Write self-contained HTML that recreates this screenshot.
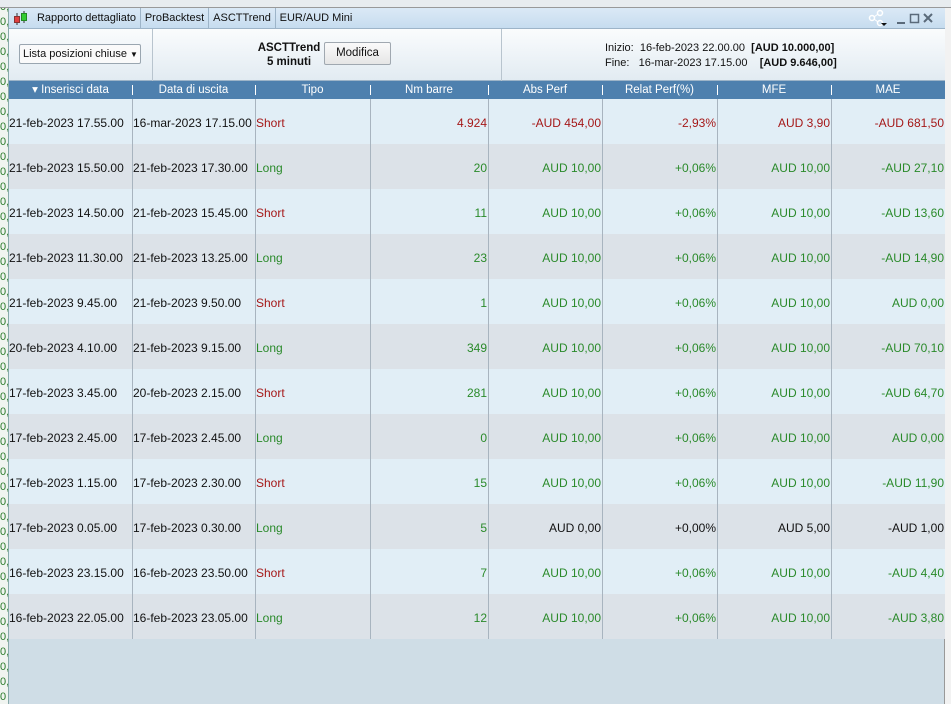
<!DOCTYPE html>
<html><head><meta charset="utf-8"><style>
*{margin:0;padding:0;box-sizing:border-box}
body{width:951px;height:704px;overflow:hidden;background:#f4f4f4;font-family:"Liberation Sans",Arial,sans-serif;font-size:12px;position:relative}
.abs{position:absolute}
.left{left:0;top:0;width:8px;height:704px;background:#f0f4f0;overflow:hidden;color:#2a7a2a;font-size:11px;line-height:15px}
.win{left:8px;top:8px;width:936px;height:696px;background:#cfdde6;border-left:1px solid #8aa;}
.title{left:0;top:0;width:936px;height:21px;background:linear-gradient(#dbe9f6,#c6dcef);border-bottom:1px solid #9db4c8}
.tab{position:absolute;top:0;height:20px;line-height:20px;font-size:11px;color:#111;border-right:1px solid #9db4c8;text-align:center;white-space:nowrap;overflow:hidden}
.tool{left:0;top:21px;width:936px;height:52px;background:linear-gradient(#fafcfd,#e2ebf2);border-bottom:1px solid #9db4c8}
.hdr{left:0;top:73px;width:936px;height:18px;background:#4e80ae;color:#fff;font-size:11.5px}
.hdr div{position:absolute;top:0;height:18px;line-height:18px;text-align:center}
.hdr span{position:absolute;top:4px;width:1px;height:10px;background:#fff}
.row{position:absolute;left:0;width:936px;height:45px}
.row div{position:absolute;top:0;height:45px;line-height:48px;white-space:nowrap;font-size:12px}
.vl{position:absolute;top:91px;width:1px;height:540px;background:#a8b4bf}
.g{color:#2a8a2a}.r{color:#a51818}.k{color:#111}
</style></head><body>
<div class="abs left">0,<br>0,<br>0,<br>0,<br>0,<br>0,<br>0,<br>0,<br>0,<br>0,<br>0,<br>0,<br>0,<br>0,<br>0,<br>0,<br>0,<br>0,<br>0,<br>0,<br>0,<br>0,<br>0,<br>0,<br>0,<br>0,<br>0,<br>0,<br>0,<br>0,<br>0,<br>0,<br>0,<br>0,<br>0,<br>0,<br>0,<br>0,<br>0,<br>0,<br>0,<br>0,<br>0,<br>0,<br>0,<br>0,<br>0</div>
<div class="abs" style="left:0;top:0;width:951px;height:8px;background:#e8ecef;border-bottom:1px solid #999"></div>
<div class="abs" style="left:944px;top:8px;width:7px;height:696px;background:#f2f2f2;border-left:1px solid #999"></div>
<div class="abs win">
 <div class="abs title">
  <svg class="abs" style="left:4px;top:3px" width="16" height="15"><line x1="4" y1="2" x2="4" y2="14" stroke="#333"/><rect x="1.5" y="5.5" width="5" height="6" fill="#e04040" stroke="#833"/><line x1="11" y1="0" x2="11" y2="12" stroke="#333"/><rect x="8.5" y="2.5" width="5" height="7" fill="#3c3" stroke="#282"/></svg>
  <div class="tab" style="left:24px;width:108px">Rapporto dettagliato</div>
  <div class="tab" style="left:132px;width:68px">ProBacktest</div>
  <div class="tab" style="left:200px;width:67px">ASCTTrend</div>
  <div class="tab" style="left:267px;width:80px;border:none">EUR/AUD Mini</div>
  <svg class="abs" style="left:858px;top:1px" width="72" height="18"><circle cx="5" cy="9" r="2.5" fill="none" stroke="#fff" stroke-width="1.5"/><circle cx="13" cy="4" r="2.5" fill="none" stroke="#fff" stroke-width="1.5"/><circle cx="13" cy="14" r="2.5" fill="none" stroke="#fff" stroke-width="1.5"/><line x1="7" y1="8" x2="11" y2="5" stroke="#fff"/><line x1="7" y1="10" x2="11" y2="13" stroke="#fff"/><path d="M14 14h6l-3 3z" fill="#111"/><line x1="30" y1="14" x2="38" y2="14" stroke="#5a6a7a" stroke-width="2"/><rect x="43.5" y="5.5" width="8" height="8" fill="none" stroke="#5a6a7a" stroke-width="1.5"/><path d="M57 5l8 8M65 5l-8 8" stroke="#5a6a7a" stroke-width="2"/></svg>
 </div>
 <div class="abs tool">
  <div class="abs" style="left:143px;top:0;width:1px;height:52px;background:#b8c4ce"></div>
  <div class="abs" style="left:492px;top:0;width:1px;height:52px;background:#b8c4ce"></div>
  <div class="abs" style="left:10px;top:15px;width:122px;height:20px;border:1px solid #9aa6b0;border-radius:2px;background:#fafafa;line-height:18px;padding-left:3px;color:#111;font-size:11px;white-space:nowrap;overflow:hidden">Lista posizioni chiuse <span style="font-size:8px">▼</span></div>
  <div class="abs" style="left:230px;top:12px;width:100px;text-align:center;font-weight:bold;line-height:14px;color:#111;font-size:11.5px">ASCTTrend<br>5 minuti</div>
  <div class="abs" style="left:315px;top:13px;width:67px;height:23px;border:1px solid #a0a8b0;border-radius:2px;background:linear-gradient(#fafafa,#e6e6e6);line-height:21px;text-align:center;color:#111;font-size:11.5px">Modifica</div>
  <div class="abs" style="left:596px;top:12px;line-height:15px;color:#111;white-space:pre;font-size:11px">Inizio:  16-feb-2023 22.00.00  <b>[AUD 10.000,00]</b>
Fine:   16-mar-2023 17.15.00    <b>[AUD 9.646,00]</b></div>
 </div>
 <div class="abs hdr">
  <div style="left:0;width:123px">▾ Inserisci data</div><span style="left:123px"></span>
  <div style="left:123px;width:123px">Data di uscita</div><span style="left:246px"></span>
  <div style="left:246px;width:115px">Tipo</div><span style="left:361px"></span>
  <div style="left:361px;width:118px">Nm barre</div><span style="left:479px"></span>
  <div style="left:479px;width:114px">Abs Perf</div><span style="left:593px"></span>
  <div style="left:593px;width:115px">Relat Perf(%)</div><span style="left:708px"></span>
  <div style="left:708px;width:114px">MFE</div><span style="left:822px"></span>
  <div style="left:822px;width:114px">MAE</div>
 </div>
 <div id="rows"></div>
 <div class="vl" style="left:123px"></div><div class="vl" style="left:246px"></div><div class="vl" style="left:361px"></div><div class="vl" style="left:479px"></div><div class="vl" style="left:593px"></div><div class="vl" style="left:708px"></div><div class="vl" style="left:822px"></div>
</div>
<script>
var d=[
["21-feb-2023 17.55.00","16-mar-2023 17.15.00","Short","4.924","-AUD 454,00","-2,93%","AUD 3,90","-AUD 681,50","r"],
["21-feb-2023 15.50.00","21-feb-2023 17.30.00","Long","20","AUD 10,00","+0,06%","AUD 10,00","-AUD 27,10","g"],
["21-feb-2023 14.50.00","21-feb-2023 15.45.00","Short","11","AUD 10,00","+0,06%","AUD 10,00","-AUD 13,60","g"],
["21-feb-2023 11.30.00","21-feb-2023 13.25.00","Long","23","AUD 10,00","+0,06%","AUD 10,00","-AUD 14,90","g"],
["21-feb-2023 9.45.00","21-feb-2023 9.50.00","Short","1","AUD 10,00","+0,06%","AUD 10,00","AUD 0,00","g"],
["20-feb-2023 4.10.00","21-feb-2023 9.15.00","Long","349","AUD 10,00","+0,06%","AUD 10,00","-AUD 70,10","g"],
["17-feb-2023 3.45.00","20-feb-2023 2.15.00","Short","281","AUD 10,00","+0,06%","AUD 10,00","-AUD 64,70","g"],
["17-feb-2023 2.45.00","17-feb-2023 2.45.00","Long","0","AUD 10,00","+0,06%","AUD 10,00","AUD 0,00","g"],
["17-feb-2023 1.15.00","17-feb-2023 2.30.00","Short","15","AUD 10,00","+0,06%","AUD 10,00","-AUD 11,90","g"],
["17-feb-2023 0.05.00","17-feb-2023 0.30.00","Long","5","AUD 0,00","+0,00%","AUD 5,00","-AUD 1,00","k"],
["16-feb-2023 23.15.00","16-feb-2023 23.50.00","Short","7","AUD 10,00","+0,06%","AUD 10,00","-AUD 4,40","g"],
["16-feb-2023 22.05.00","16-feb-2023 23.05.00","Long","12","AUD 10,00","+0,06%","AUD 10,00","-AUD 3,80","g"]];
var h="";
d.forEach(function(r,i){
 var t=r[2]=="Short"?"r":"g", c=r[8];
 var n=c=="k"?"g":c;
 h+='<div class="row" style="top:'+(91+i*45)+'px;background:'+(i%2?'#dce2e8':'#e1eef6')+'">'+
 '<div class="k" style="left:0px">'+r[0]+'</div>'+
 '<div class="k" style="left:124px">'+r[1]+'</div>'+
 '<div class="'+t+'" style="left:247px">'+r[2]+'</div>'+
 '<div class="'+n+'" style="right:458px">'+r[3]+'</div>'+
 '<div class="'+c+'" style="right:344px">'+r[4]+'</div>'+
 '<div class="'+c+'" style="right:229px">'+r[5]+'</div>'+
 '<div class="'+c+'" style="right:115px">'+r[6]+'</div>'+
 '<div class="'+c+'" style="right:1px">'+r[7]+'</div></div>';
});
document.getElementById("rows").innerHTML=h;
</script>
</body></html>
